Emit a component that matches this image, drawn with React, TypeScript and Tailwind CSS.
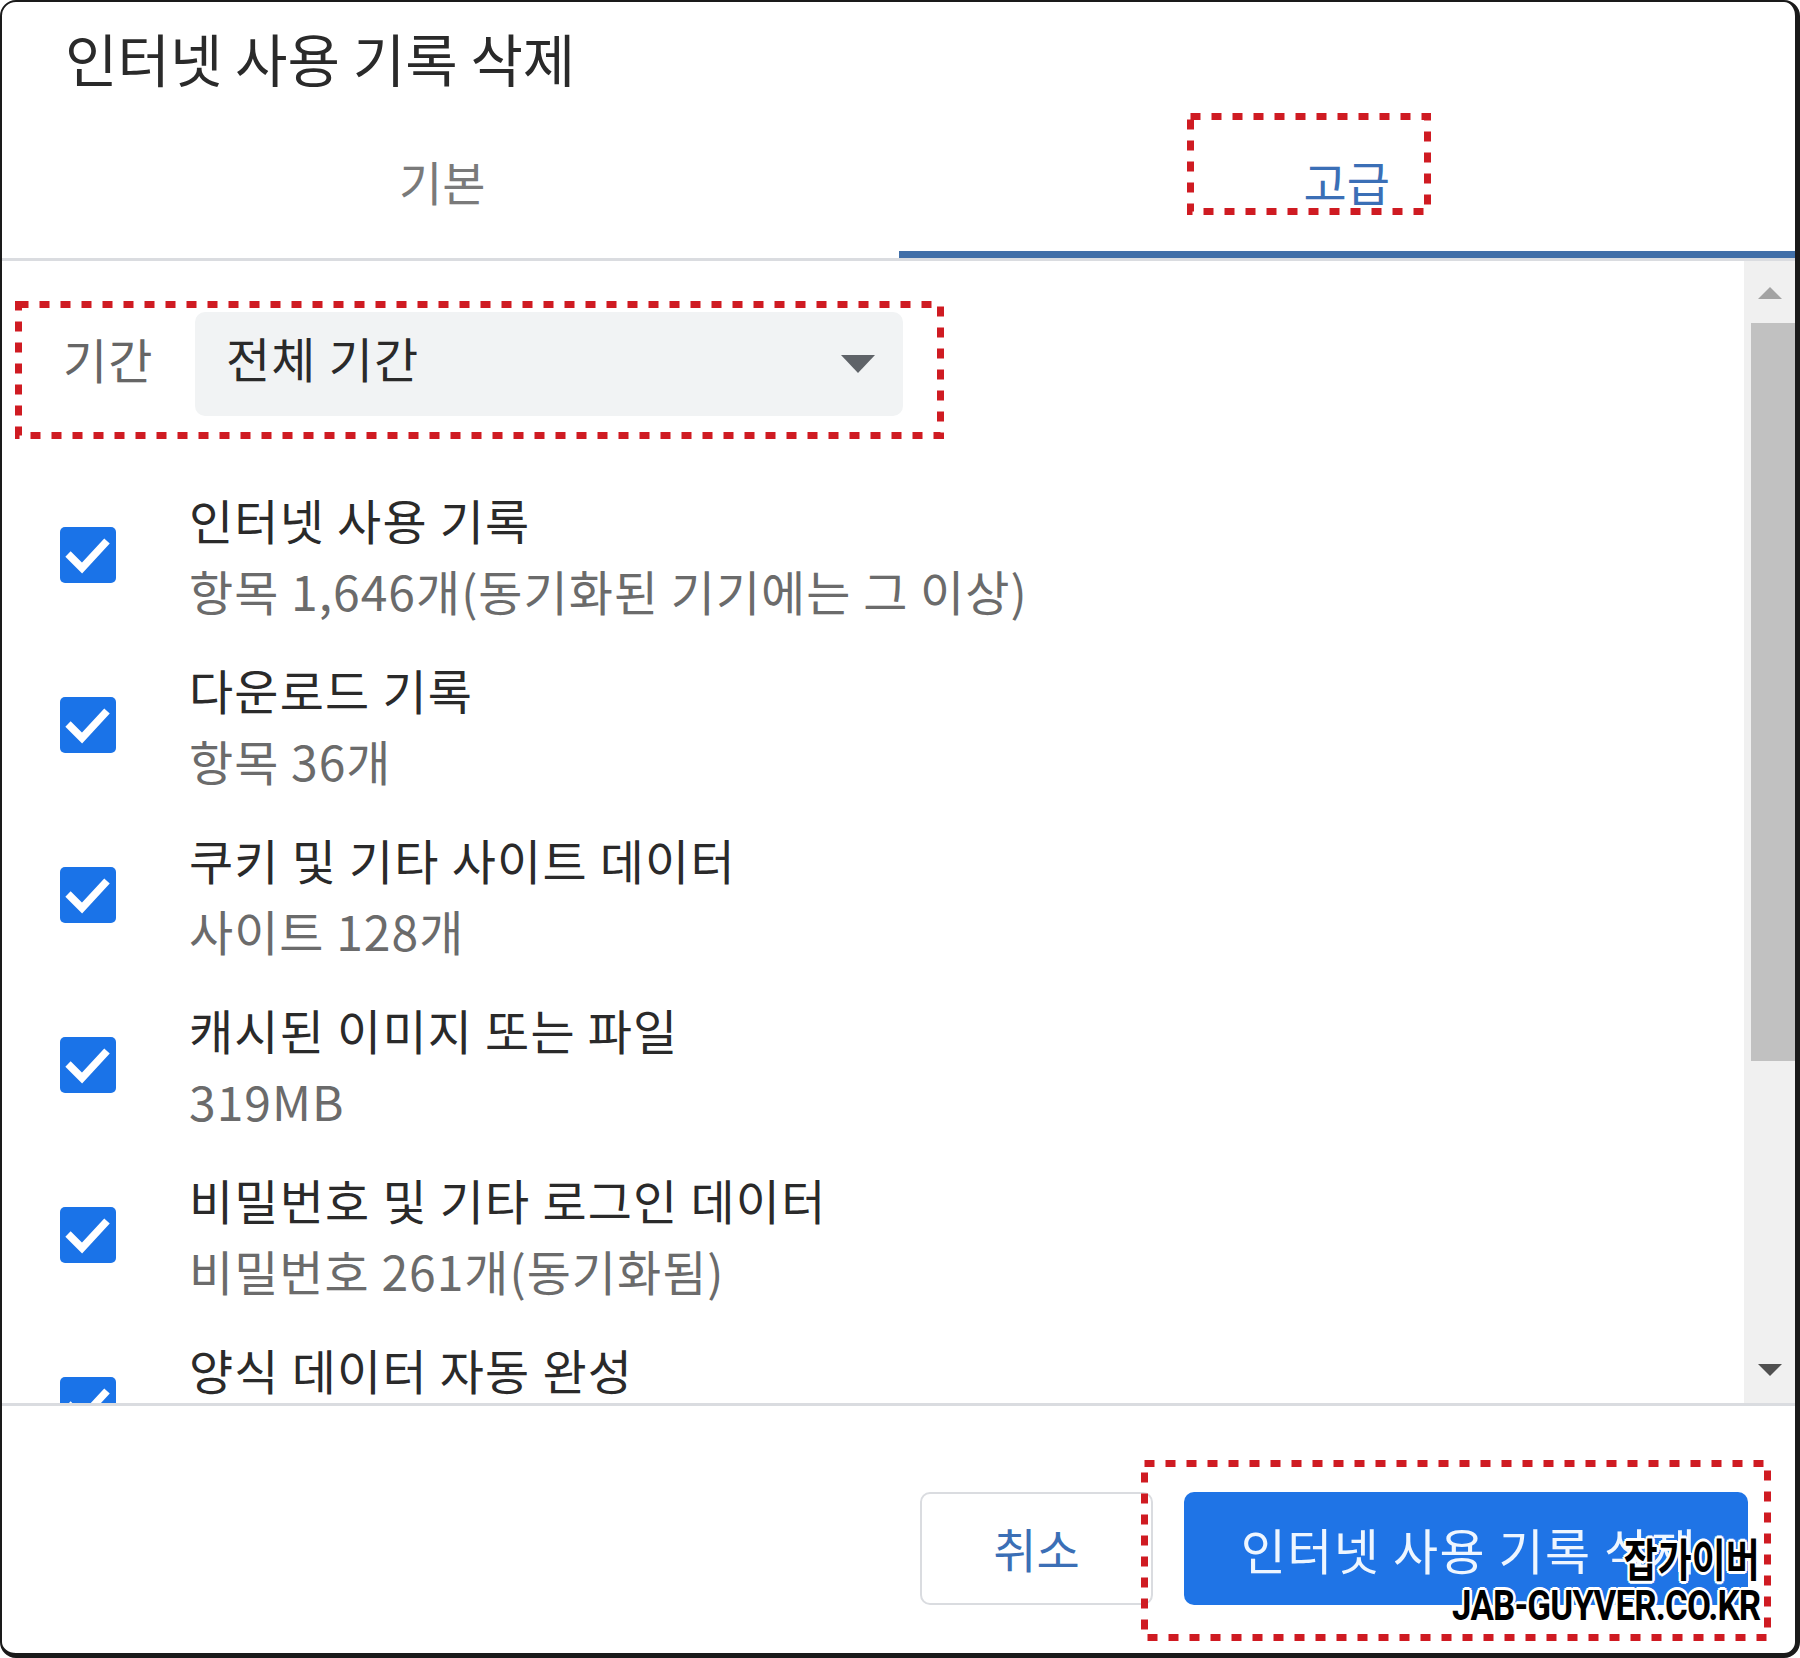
import React from "react";

const RED = "#cf1b22";

// red dotted annotation frame, drawn over content
function DashBox({ w, h, className }: { w: number; h: number; className?: string }) {
  return (
    <svg width={w} height={h} className={className} viewBox={`0 0 ${w} ${h}`}>
      <rect x={3.5} y={3.5} width={w - 7} height={h - 7} fill="none" stroke={RED} strokeWidth={7} strokeDasharray="10 11" />
    </svg>
  );
}

function Check() {
  return (
    <div className="w-[56px] h-[56px] shrink-0 rounded-[5px] bg-[#1a73e8] flex items-center justify-center">
      <svg width="56" height="56" viewBox="0 0 56 56">
        <path d="M8 27 L22 41 L47 14" fill="none" stroke="#fff" strokeWidth="7.5" />
      </svg>
    </div>
  );
}

const rows = [
  { title: "인터넷 사용 기록", sub: "항목 1,646개(동기화된 기기에는 그 이상)" },
  { title: "다운로드 기록", sub: "항목 36개" },
  { title: "쿠키 및 기타 사이트 데이터", sub: "사이트 128개" },
  { title: "캐시된 이미지 또는 파일", sub: "319MB" },
  { title: "비밀번호 및 기타 로그인 데이터", sub: "비밀번호 261개(동기화됨)" },
  { title: "양식 데이터 자동 완성", sub: "" },
];

export default function App() {
  return (
    <div className="w-[1800px] h-[1658px] bg-white font-['Noto_Sans_CJK_KR','Noto_Sans',sans-serif]">
      <div className="relative h-full flex flex-col overflow-hidden bg-white rounded-[16px] border-t-2 border-l-2 border-r-[5px] border-b-[5px] border-[#1a1a1a]">
        {/* title */}
        <div className="h-[102px] pl-[63px] pt-[25px] text-[57px] leading-[60px] text-[#2a2a2a]">인터넷 사용 기록 삭제</div>

        {/* tabs */}
        <div className="h-[154px] grid grid-cols-2 text-[47px]">
          <div className="flex flex-col pt-[7px]">
            <div className="flex-1 flex items-center justify-center pr-[16px] text-[#7a7a7a]">기본</div>
            <div className="h-[7px]"></div>
          </div>
          <div className="flex flex-col pt-[7px]">
            <div className="flex-1 flex items-center justify-center text-[#3b6fb6]">고급</div>
            <div className="h-[7px] bg-[#416fa8]"></div>
          </div>
        </div>
        <div className="h-[3px] bg-[#dadce0]"></div>

        {/* scroll area */}
        <div className="h-[1142px] flex">
          <div className="flex-1 overflow-hidden">
            <div className="relative ml-[13px] mt-[40px] w-[929px] h-[138px]">
              <DashBox w={929} h={138} className="absolute inset-0" />
              <div className="flex pl-[48px] pt-[11px] text-[48px] tracking-[1.2px]">
                <div className="w-[132px] h-[104px] flex items-center pb-[12px] text-[#666]">기간</div>
                <div className="w-[708px] h-[104px] rounded-[10px] bg-[#f1f3f4] flex items-center justify-between pl-[31px] pr-[28px] text-[#2a2a2a]">
                  <span className="pb-[14px]">전체 기간</span>
                  <svg width="34" height="18" viewBox="0 0 34 18">
                    <path d="M0 0 L34 0 L17 18 Z" fill="#5f6368" />
                  </svg>
                </div>
              </div>
            </div>

            <div className="mt-[45px] flex flex-col gap-[28px]">
              {rows.map((r) => (
                <div key={r.title} className="flex items-center pl-[58px] gap-[73px]">
                  <Check />
                  <div className="text-[48px] leading-[71px]">
                    <div className="text-[#2a2a2a] tracking-[1.2px]">{r.title}</div>
                    <div className="text-[#6b6b6b] tracking-[1px] h-[71px]">{r.sub}</div>
                  </div>
                </div>
              ))}
            </div>
          </div>

          {/* scrollbar */}
          <div className="w-[51px] bg-[#f0f0f0] flex flex-col items-center pt-[24px] pb-[25px]">
            <svg width="24" height="14" viewBox="0 0 24 14">
              <path d="M0 14 L24 14 L12 2 Z" fill="#a3a3a3" />
            </svg>
            <div className="mt-[24px] h-[738px] w-[44px] ml-[7px] bg-[#c1c1c1]"></div>
            <div className="flex-1"></div>
            <svg width="24" height="14" viewBox="0 0 24 14">
              <path d="M0 0 L24 0 L12 12 Z" fill="#505050" />
            </svg>
          </div>
        </div>
        <div className="h-[3px] bg-[#dadce0]"></div>

        {/* footer */}
        <div className="relative h-[247px] flex justify-end items-start pt-[86px] pr-[47px] gap-[31px]">
          <button className="w-[233px] h-[113px] rounded-[10px] border-2 border-[#dadce0] bg-white text-[47px] text-[#3b6fb6]">취소</button>
          <button className="w-[564px] h-[113px] rounded-[10px] bg-[#1f74e6] text-[49px] tracking-[1.5px] pl-[6px] text-[#eef6ff]">인터넷 사용 기록 삭제</button>

          <DashBox w={630} h={181} className="absolute left-[1139px] top-[54px]" />

          {/* watermark */}
          <div className="absolute right-[35px] top-[126px] flex flex-col items-end font-bold text-black [text-shadow:3px_0_0_#fff,-3px_0_0_#fff,0_3px_0_#fff,0_-3px_0_#fff,2px_2px_0_#fff,-2px_-2px_0_#fff,2px_-2px_0_#fff,-2px_2px_0_#fff]">
            <div className="text-[45px] leading-[52px] scale-x-[0.82] origin-right">잡가이버</div>
            <div className="font-['Roboto',sans-serif] text-[42px] leading-[44px] scale-x-[0.83] origin-right tracking-[-1px]">JAB-GUYVER.CO.KR</div>
          </div>
        </div>

        <DashBox w={244} h={102} className="absolute left-[1185px] top-[111px]" />
      </div>
    </div>
  );
}
